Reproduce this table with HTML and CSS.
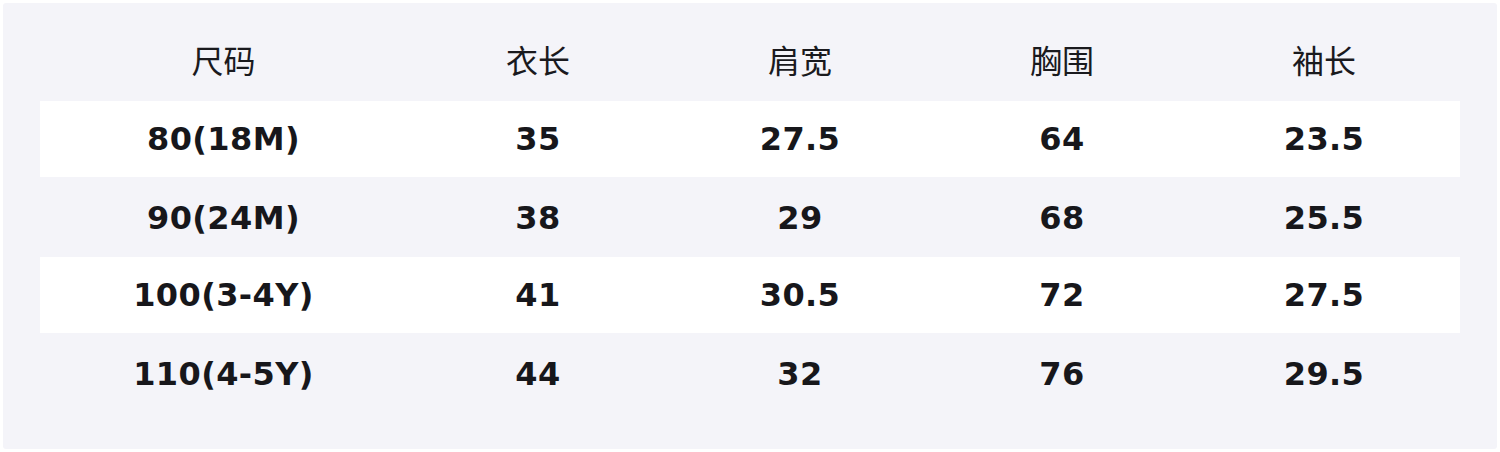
FILE: index.html
```html
<!DOCTYPE html>
<html lang="zh">
<head>
<meta charset="utf-8">
<link rel="stylesheet" href="styles.css">
</head>
<body>
<div class="panel">
  <div class="row head">
    <div>尺码</div><div>衣长</div><div>肩宽</div><div>胸围</div><div>袖长</div>
  </div>
  <div class="row stripe">
    <div>80(18M)</div><div>35</div><div>27.5</div><div>64</div><div>23.5</div>
  </div>
  <div class="row">
    <div>90(24M)</div><div>38</div><div>29</div><div>68</div><div>25.5</div>
  </div>
  <div class="row stripe">
    <div>100(3-4Y)</div><div>41</div><div>30.5</div><div>72</div><div>27.5</div>
  </div>
  <div class="row">
    <div>110(4-5Y)</div><div>44</div><div>32</div><div>76</div><div>29.5</div>
  </div>
</div>
</body>
</html>
```
FILE: styles.css
```css
html, body {
  margin: 0;
  padding: 0;
  background: #ffffff;
}
body {
  width: 1500px;
  height: 452px;
  padding: 3px;
  box-sizing: border-box;
}
.panel {
  height: 446px;
  box-sizing: border-box;
  background: #f4f4f9;
  border-radius: 3px;
  padding: 20px 37px 0 37px;
}
.row {
  display: grid;
  grid-template-columns: 367px repeat(4, 262px);
  height: 78px;
  align-items: center;
  font-family: "DejaVu Sans", "Noto Sans CJK SC", sans-serif;
  font-weight: bold;
  font-size: 32px;
  letter-spacing: 0.4px;
  color: #17171b;
}
.row > div {
  text-align: center;
  line-height: 1;
}
.row.head {
  font-family: "Noto Sans CJK SC", sans-serif;
  font-weight: normal;
  letter-spacing: 0;
  color: #1a1a1e;
}
.row.head > div {
  padding-bottom: 7px;
}
.row.stripe {
  background: #ffffff;
  height: 76px;
  margin-bottom: 2px;
}
```
